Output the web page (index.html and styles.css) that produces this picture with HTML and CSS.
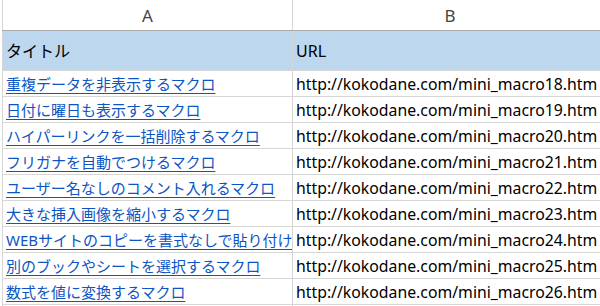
FILE: index.html
```html
<!DOCTYPE html>
<html lang="ja">
<head>
<meta charset="utf-8">
<title>マクロ一覧</title>
<link rel="stylesheet" href="styles.css">
</head>
<body>
<div class="sheet">
  <table class="grid">
    <colgroup>
      <col class="col-a">
      <col class="col-b">
    </colgroup>
    <thead>
      <tr class="col-heads">
        <th>A</th>
        <th>B</th>
      </tr>
    </thead>
    <tbody>
      <tr class="title-row">
        <td><span class="cell">タイトル</span></td>
        <td><span class="cell">URL</span></td>
      </tr>
      <tr>
        <td><a class="cell link" href="#">重複データを非表示するマクロ</a></td>
        <td><span class="cell url">http://kokodane.com/mini_macro18.htm</span></td>
      </tr>
      <tr>
        <td><a class="cell link" href="#">日付に曜日も表示するマクロ</a></td>
        <td><span class="cell url">http://kokodane.com/mini_macro19.htm</span></td>
      </tr>
      <tr>
        <td><a class="cell link" href="#">ハイパーリンクを一括削除するマクロ</a></td>
        <td><span class="cell url">http://kokodane.com/mini_macro20.htm</span></td>
      </tr>
      <tr>
        <td><a class="cell link" href="#">フリガナを自動でつけるマクロ</a></td>
        <td><span class="cell url">http://kokodane.com/mini_macro21.htm</span></td>
      </tr>
      <tr>
        <td><a class="cell link" href="#">ユーザー名なしのコメント入れるマクロ</a></td>
        <td><span class="cell url">http://kokodane.com/mini_macro22.htm</span></td>
      </tr>
      <tr>
        <td><a class="cell link" href="#">大きな挿入画像を縮小するマクロ</a></td>
        <td><span class="cell url">http://kokodane.com/mini_macro23.htm</span></td>
      </tr>
      <tr>
        <td><a class="cell link" href="#">WEBサイトのコピーを書式なしで貼り付けるマクロ</a></td>
        <td><span class="cell url">http://kokodane.com/mini_macro24.htm</span></td>
      </tr>
      <tr>
        <td><a class="cell link" href="#">別のブックやシートを選択するマクロ</a></td>
        <td><span class="cell url">http://kokodane.com/mini_macro25.htm</span></td>
      </tr>
      <tr>
        <td><a class="cell link" href="#">数式を値に変換するマクロ</a></td>
        <td><span class="cell url">http://kokodane.com/mini_macro26.htm</span></td>
      </tr>
      <tr class="spare">
        <td></td>
        <td></td>
      </tr>
    </tbody>
  </table>
</div>
</body>
</html>
```

FILE: styles.css
```css
html, body {
  margin: 0;
  padding: 0;
  background: #ffffff;
}

.sheet {
  width: 600px;
  height: 306px;
  overflow: hidden;
  padding-left: 2px;
  box-sizing: border-box;
}

.grid {
  border-collapse: collapse;
  table-layout: fixed;
  width: 605px;
  font-family: "Noto Sans", "Noto Sans CJK JP", sans-serif;
  font-size: 15px;
  color: #000000;
}

.col-a { width: 290px; }
.col-b { width: 315px; }

.grid th,
.grid td {
  padding: 0;
  border-left: 1px solid #d6d6d6;
  border-right: 1px solid #d6d6d6;
  border-bottom: 1px solid #d6d6d6;
  white-space: nowrap;
  overflow: hidden;
  text-align: left;
  vertical-align: middle;
}

/* column letters */
.col-heads th {
  height: 30px;
  font-weight: normal;
  font-size: 17px;
  color: #444444;
  text-align: center;
  border-bottom: 1px solid #ababab;
}

.grid tbody tr td {
  height: 25px;
}

.grid tbody tr.title-row td {
  height: 39px;
  background: #bdd7ee;
  font-size: 16px;
}

.cell {
  display: block;
  padding-left: 3px;
  line-height: 22px;
  white-space: nowrap;
  overflow: hidden;
}

.url {
  font-size: 15.8px;
}

.link {
  color: #0b55c4;
  text-decoration: underline;
  text-underline-offset: 3px;
  text-decoration-thickness: 1px;
}
```
